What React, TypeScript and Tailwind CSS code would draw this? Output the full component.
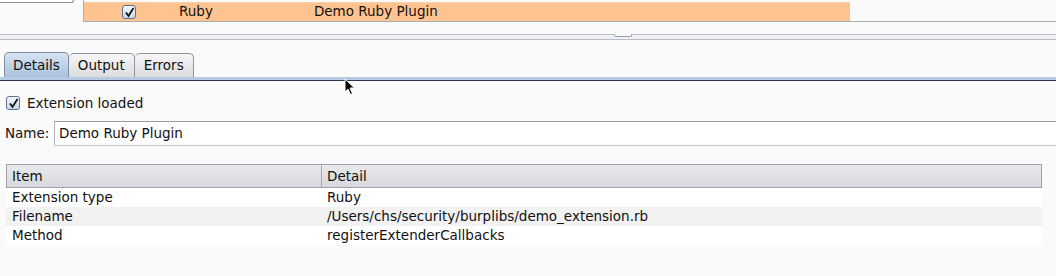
const Check = ({ size = 14 }: { size?: number }) => (
    <div
        className="flex items-center justify-center rounded-[3px] border border-[#5d6f8c] bg-gradient-to-b from-[#f4f8fc] to-[#c9d8ea]"
        style={{ width: size, height: size }}
    >
        <svg width="11" height="11" viewBox="0 0 11 11">
            <path d="M2 5.5 L4.5 9 L9.5 1" fill="none" stroke="#111" strokeWidth="1.8" />
        </svg>
    </div>
)

const rows = [
    { item: "Extension type", detail: "Ruby", bg: "bg-white" },
    { item: "Filename", detail: "/Users/chs/security/burplibs/demo_extension.rb", bg: "bg-[#f2f2f2]" },
    { item: "Method", detail: "registerExtenderCallbacks", bg: "bg-white" },
]

const App = () => {
    return (
        <div className="relative w-[1056px] h-[276px] overflow-hidden bg-[#fafafa] text-[#111] font-['DejaVu_Sans',sans-serif] text-[13.5px]">
            {/* top extensions list */}
            <div className="flex h-[22px]">
                <div className="w-[74px] h-[3px] border-r border-b border-[#8a8f99] rounded-br-[4px] bg-white" />
                <div className="ml-[9px] flex-1 flex border-l border-b border-[#a9adb4]">
                    <div className="w-[766px] mt-[2px] flex items-center bg-[#ffc38f] border-t border-[#ffcfa6]">
                        <div className="ml-[38px]">
                            <Check />
                        </div>
                        <span className="ml-[43px] leading-none">Ruby</span>
                        <span className="ml-[101px] leading-none">Demo Ruby Plugin</span>
                    </div>
                </div>
            </div>

            {/* splitter */}
            <div className="relative mt-[12px] h-[6px] border-t border-b border-[#b7bcc5] bg-[#eef0f3]">
                <div className="absolute left-[614px] -top-px w-[18px] h-[3px] rounded-b-[2px] border border-t-0 border-[#9aa0a9] bg-[#f7f8fa]" />
            </div>

            {/* tabs */}
            <div className="mt-[11px] flex pl-[4px] h-[26px] items-end">
                <div className="h-[25px] px-[8px] flex items-center border border-b-0 border-[#7f8da0] rounded-t-[5px] bg-gradient-to-b from-[#d6e4f1] to-[#a9c3dc]">
                    Details
                </div>
                <div className="h-[24px] px-[9px] flex items-center border border-l-0 border-b-0 border-[#8f949c] rounded-t-[5px] bg-gradient-to-b from-[#f6f6f7] to-[#dcdde0]">
                    Output
                </div>
                <div className="h-[24px] px-[9px] flex items-center border border-l-0 border-b-0 border-[#8f949c] rounded-t-[5px] bg-gradient-to-b from-[#f6f6f7] to-[#dcdde0]">
                    Errors
                </div>
            </div>
            <div className="h-[3px] bg-[#b7cce3]" />
            <div className="h-px bg-[#2c364a]" />

            {/* extension loaded */}
            <div className="mt-[14px] ml-[6px] flex items-center gap-[7px] h-[16px]">
                <Check />
                <span>Extension loaded</span>
            </div>

            {/* name */}
            <div className="mt-[10px] flex items-center h-[25px]">
                <span className="ml-[5px] w-[49px]">Name:</span>
                <div className="flex-1 h-[25px] flex items-center pl-[4px] bg-white border border-r-0 border-t-[#9a9ea5] border-b-[#c4c7cc] border-l-[#b4b8be]">
                    Demo Ruby Plugin
                </div>
            </div>

            {/* table */}
            <div className="mt-[18px] ml-[6px] w-[1036px]">
                <div className="flex h-[24px] border border-[#9ea3ab] bg-gradient-to-b from-[#e9eaed] to-[#d6d8dc]">
                    <div className="w-[315px] pl-[5px] flex items-center border-r border-[#a3a7ae]">Item</div>
                    <div className="flex-1 pl-[5px] flex items-center">Detail</div>
                </div>
                {rows.map((r) => (
                    <div key={r.item} className={`flex h-[19px] items-center ${r.bg}`}>
                        <div className="w-[316px] pl-[6px]">{r.item}</div>
                        <div className="flex-1 pl-[5px]">{r.detail}</div>
                    </div>
                ))}
            </div>

            {/* mouse cursor */}
            <svg className="absolute left-[344px] top-[78px]" width="12" height="18" viewBox="0 0 12 18">
                <path d="M1 1 L1 14 L4 11 L6.5 16.5 L8.5 15.5 L6 10 L10.5 10 Z" fill="#000" stroke="#fff" strokeWidth="1" />
            </svg>
        </div>
    )
}

export default App
